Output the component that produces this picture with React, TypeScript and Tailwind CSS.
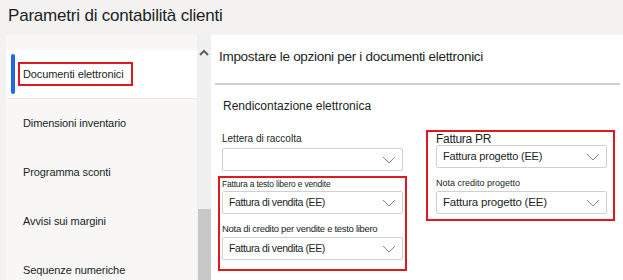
import React from 'react';

const font = { fontFamily: '"Liberation Sans", Arial, sans-serif' };

const Chevron = () => (
  <svg width="14" height="8" viewBox="0 0 14 8" className="shrink-0">
    <polyline points="1,1 7,7 13,1" fill="none" stroke="#8a8886" strokeWidth="1" />
  </svg>
);

const Select = ({ value, size = 'text-[10.5px] tracking-[-0.4px]' }: { value?: string; size?: string }) => (
  <div className="h-[23px] border border-[#d2d0ce] rounded-[2px] bg-white flex items-center justify-between pl-[6px] pr-[6px]">
    <span className={`${size} whitespace-nowrap text-[#201f1e]`}>{value}</span>
    <Chevron />
  </div>
);

const navItems = ['Dimensioni inventario', 'Programma sconti', 'Avvisi sui margini', 'Sequenze numeriche'];

export default function App() {
  return (
    <div className="w-[623px] h-[280px] bg-[#f3f2f1] overflow-hidden flex flex-col text-[#201f1e] whitespace-nowrap" style={font}>
      {/* titolo */}
      <div className="h-[34px] flex items-center pl-[8px] pb-[2px] text-[17px] tracking-[-0.2px] shrink-0">Parametri di contabilità clienti</div>

      <div className="flex flex-1 pl-[6px]">
        {/* nav sinistra */}
        <div className="w-[191px] bg-[#f8f7f6] flex flex-col shrink-0">
          <div className="h-[16px]" />
          <div className="h-[49px] bg-white flex items-center pl-[5px] border-b border-[#edebe9]">
            <div className="w-[4px] h-[40px] rounded-[2px] bg-[#2266e3]" />
            <div className="ml-[3px] border-2 border-[#e0191f] w-[115px] h-[24px] px-[3px] flex items-center text-[11px] tracking-[-0.1px]">
              Documenti elettronici
            </div>
          </div>
          {navItems.map((n) => (
            <div key={n} className="h-[49px] shrink-0 flex items-center pl-[17px] text-[11px] tracking-[-0.1px]">
              {n}
            </div>
          ))}
        </div>

        {/* scrollbar */}
        <div className="w-[14px] bg-[#f0f0f0] flex flex-col shrink-0">
          <div className="h-[24px] flex items-end justify-center pb-[2px]">
            <svg width="10" height="7" viewBox="0 0 10 7">
              <polyline points="1,6 5,2 9,6" fill="none" stroke="#606060" strokeWidth="2" />
            </svg>
          </div>
          <div className="h-[151px]" />
          <div className="flex-1 bg-[#c8c8c8] ml-[1px]" />
        </div>

        {/* pannello destro */}
        <div className="flex-1 bg-white mt-[1px] pl-[4px] pr-[3px] flex flex-col">
          <div className="h-[50px] shrink-0 flex items-center pl-[4px] pb-[4px] text-[13.5px] tracking-[-0.3px] border-b-2 border-[#d2d0ce]">
            Impostare le opzioni per i documenti elettronici
          </div>
          <div className="h-[34px] shrink-0 flex items-center pl-[8px] text-[12px] mt-[4px]">Rendicontazione elettronica</div>

          <div className="flex gap-[19px] pl-[3px] mt-[5px]">
            {/* colonna sinistra */}
            <div className="w-[189px] flex flex-col">
              <div className="px-[4px]">
                <div className="h-[20px] flex items-end pb-[2px] text-[10px]">Lettera di raccolta</div>
                <Select />
              </div>
              <div className="mt-[5px] border-2 border-[#e0191f] px-[2px] pb-[9px]">
                <div className="h-[13px] flex items-end text-[8.5px] tracking-[-0.2px]">Fattura a testo libero e vendite</div>
                <Select value="Fattura di vendita (EE)" />
                <div className="h-[23px] flex items-end pb-[1px] text-[9.5px] tracking-[-0.3px]">Nota di credito per vendite e testo libero</div>
                <Select value="Fattura di vendita (EE)" />
              </div>
            </div>

            {/* colonna destra */}
            <div className="w-[189px] flex flex-col mt-[2px]">
              <div className="border-2 border-[#e0191f] pl-[8px] pr-[6px] pb-[5px]">
                <div className="h-[13px] flex items-center text-[12px] tracking-[-0.3px]">Fattura PR</div>
                <Select value="Fattura progetto (EE)" size="text-[11px] tracking-[-0.2px]" />
                <div className="h-[23px] flex items-end pb-[1px] text-[9px]">Nota credito progetto</div>
                <Select value="Fattura progetto (EE)" size="text-[11.5px] tracking-[-0.2px]" />
              </div>
            </div>
          </div>
        </div>
      </div>
    </div>
  );
}
